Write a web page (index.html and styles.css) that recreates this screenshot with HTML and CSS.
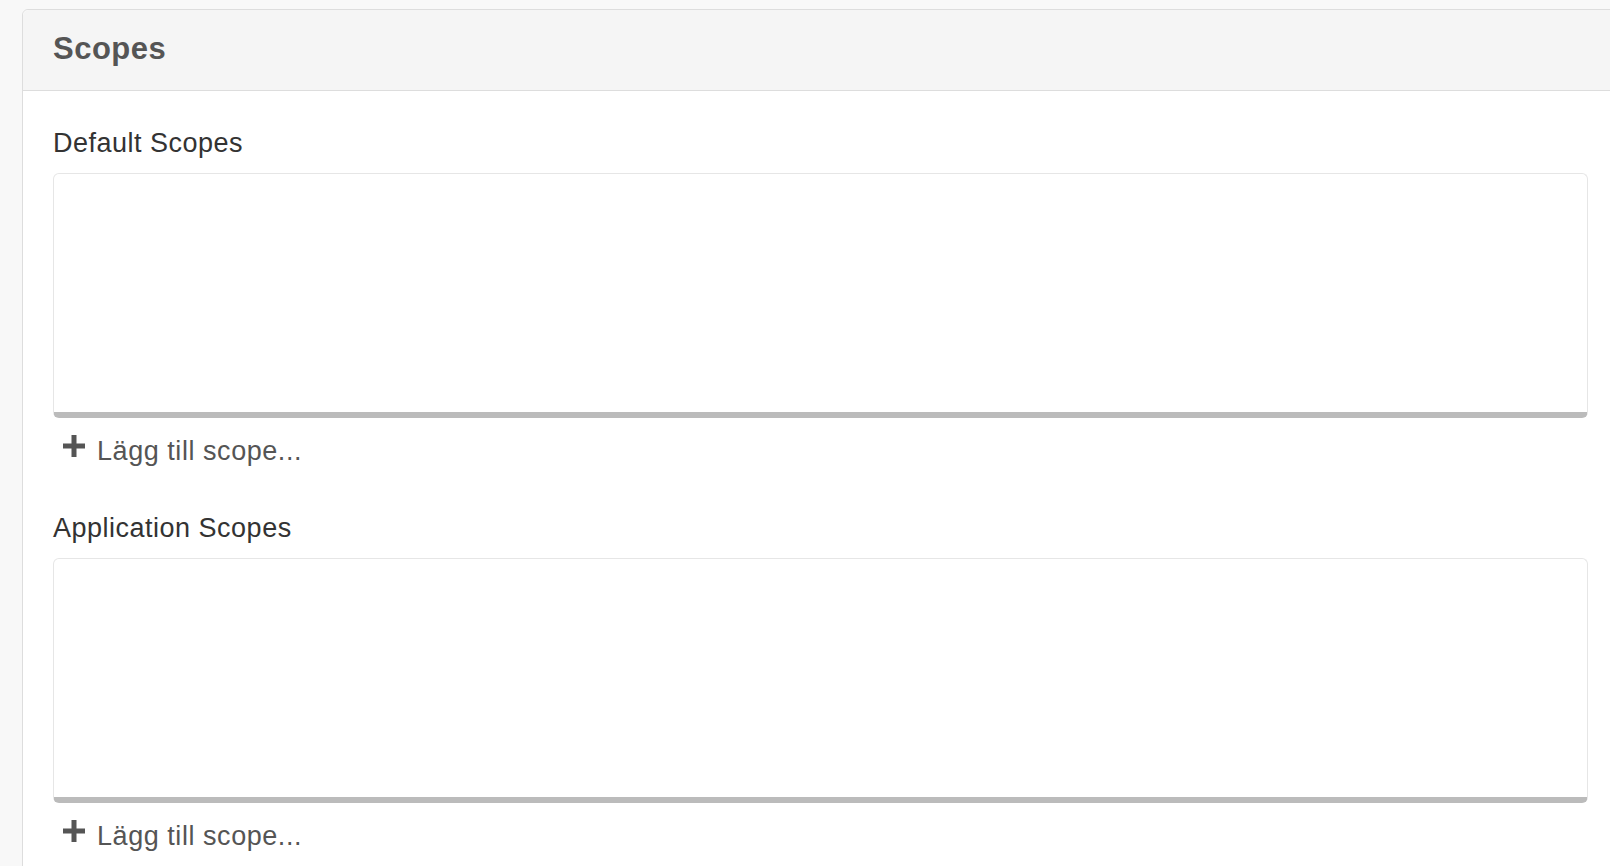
FILE: index.html
```html
<!DOCTYPE html>
<html lang="sv">
<head>
<meta charset="utf-8">
<title>Scopes</title>
<link rel="stylesheet" href="styles.css">
</head>
<body>
<div class="panel">
  <div class="panel-heading">
    <h3 class="panel-title">Scopes</h3>
  </div>
  <div class="panel-body">
    <div class="scope-group">
      <label class="scope-label">Default Scopes</label>
      <div class="scope-list"></div>
      <a class="add-scope" href="#">
        <svg class="plus" viewBox="0 0 22 22" width="22" height="22"><path d="M8.5 0h5v8.5H22v5h-8.5V22h-5v-8.5H0v-5h8.5z"/></svg>
        <span>Lägg till scope...</span>
      </a>
    </div>
    <div class="scope-group">
      <label class="scope-label">Application Scopes</label>
      <div class="scope-list"></div>
      <a class="add-scope" href="#">
        <svg class="plus" viewBox="0 0 22 22" width="22" height="22"><path d="M8.5 0h5v8.5H22v5h-8.5V22h-5v-8.5H0v-5h8.5z"/></svg>
        <span>Lägg till scope...</span>
      </a>
    </div>
  </div>
</div>
</body>
</html>
```

FILE: styles.css
```css
html, body {
  margin: 0;
  padding: 0;
}
body {
  background: #f8f8f8;
  font-family: "Liberation Sans", Arial, Helvetica, sans-serif;
  overflow: hidden;
  height: 866px;
}
.panel {
  margin: 9px 0 0 22px;
  width: 1597px;
  background: #fff;
  border: 1px solid #dddddd;
  border-radius: 6px;
  box-sizing: border-box;
  min-height: 900px;
}
.panel-heading {
  height: 80px;
  background: #f5f5f5;
  border-bottom: 1px solid #dddddd;
  border-radius: 6px 6px 0 0;
  display: flex;
  align-items: center;
  padding: 0 30px;
}
.panel-title {
  margin: 0;
  font-size: 31px;
  font-weight: bold;
  color: #555555;
  line-height: 32px;
  letter-spacing: 0.5px;
  padding-bottom: 2px;
}
.panel-body {
  padding: 36px 30px 0 30px;
}
.scope-group {
  margin-bottom: 45px;
}
.scope-label {
  display: block;
  font-size: 27px;
  line-height: 32px;
  color: #333333;
  letter-spacing: 0.5px;
}
.scope-list {
  margin-top: 14px;
  height: 238px;
  border: 1px solid #e6e6e6;
  border-bottom: 6px solid #bbbbbb;
  border-radius: 6px;
  background: #fff;
}
.add-scope {
  display: flex;
  align-items: flex-start;
  margin-top: 17px;
  margin-left: 10px;
  text-decoration: none;
  color: #555555;
  font-size: 27px;
  line-height: 32px;
  letter-spacing: 0.55px;
}
.plus {
  fill: #555555;
  margin-right: 12px;
  flex: none;
}
```
